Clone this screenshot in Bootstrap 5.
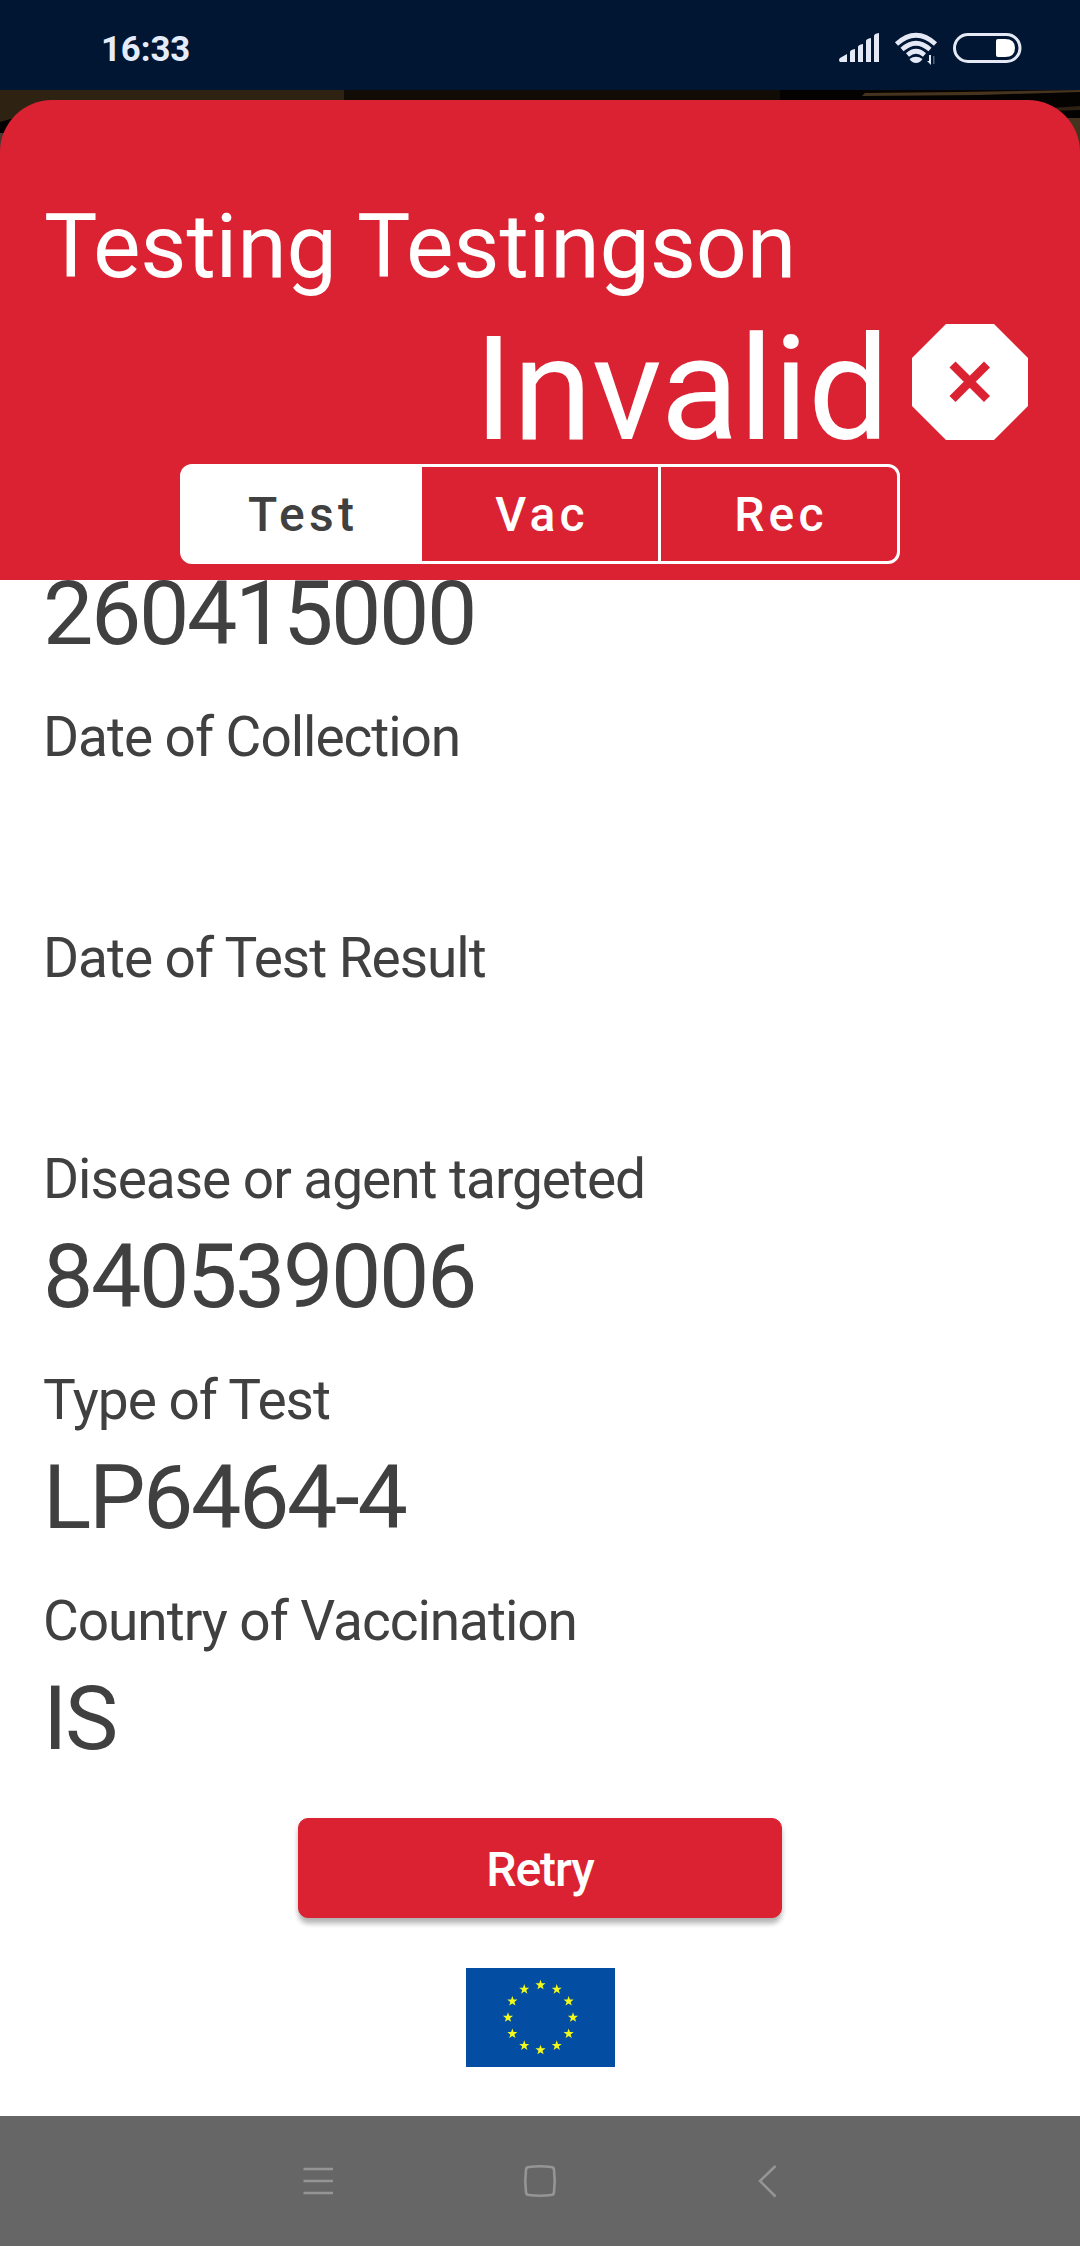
<!DOCTYPE html>
<html lang="en">
<head>
<meta charset="utf-8">
<meta name="viewport" content="width=device-width, initial-scale=1">
<title>Certificate check</title>
<link rel="stylesheet" href="https://cdn.jsdelivr.net/npm/bootstrap@5.3.0/dist/css/bootstrap.min.css">
<style>
:root { --brand-red: #da2232; --ink: #404040; }
body { font-family: Roboto, "Liberation Sans", sans-serif; color: var(--ink); background: #fff; }
.screen { width: 1080px; height: 2246px; }
.status-strip { height: 90px; background: #001633; padding: 1px 59px 0 101px; }
.status-time { font-size: 34.8px; line-height: 40px; font-weight: 700; color: #e4ecfa; letter-spacing: -.1px; padding-top: 10px; margin-bottom: 4px; }
.camera-view { position: relative; height: 490px; padding-top: 10px; background: #080502; }
.cam-art { position: absolute; left: 0; top: 0; }
.result-head { position: relative; height: 480px; background: var(--brand-red); border-radius: 52px 52px 0 0; color: #fff; padding-top: 94px; }
.holder-name { font-size: 89.7px; line-height: 106px; padding-left: 44px; letter-spacing: -.2px; }
.verdict-row { height: 160px; padding-right: 52px; }
.verdict-text { font-size: 144.3px; line-height: 160px; padding-top: 10px; margin-right: 23px; letter-spacing: -.4px; }
.verdict-icon { margin-top: 24px; }
.tab-switch { width: 720px; height: 100px; margin: 4px auto 0; }
.tab-switch .btn { --bs-btn-color: #fff; --bs-btn-border-color: #fff; --bs-btn-border-width: 3px; --bs-btn-border-radius: 12px;
  --bs-btn-active-bg: #fff; --bs-btn-active-color: var(--ink); --bs-btn-active-border-color: #fff;
  font-size: 48px; font-weight: 500; letter-spacing: 4.2px; line-height: 92px; padding: 2px 0 0 4px; flex: 0 0 242px; }
.tab-switch.btn-group > .btn:not(:first-child) { margin-left: -3px; }
.details { height: 1230px; padding-left: 43px; }
.detail-item { height: 221px; }
.detail-item.scrolled { height: 125px; }
.detail-label { font-size: 55px; line-height: 64px; font-weight: 400; letter-spacing: -1.04px; }
.detail-value { font-size: 89.7px; line-height: 106px; letter-spacing: -2.4px; margin: 13px 0 0; }
.scrolled .detail-value { margin-top: -19px; }
.retry-btn { --bs-btn-bg: var(--brand-red); --bs-btn-border-color: var(--brand-red); --bs-btn-color: #fff; --bs-btn-border-radius: 10px;
  width: 484px; height: 100px; margin-top: 8px; padding: 4px 0 0; font-size: 48px; font-weight: 500; letter-spacing: -1.1px;
  box-shadow: 0 7px 5px -1px rgba(0,0,0,.2), 0 3px 6px rgba(0,0,0,.16); }
.flag { margin-top: 50px; }
.system-nav { height: 130px; background: #666; }
</style>
<script src="https://cdn.jsdelivr.net/npm/bootstrap@5.3.0/dist/js/bootstrap.bundle.min.js"></script>
</head>
<body>
<div class="screen d-flex flex-column overflow-hidden">
  <div class="status-strip d-flex align-items-center justify-content-between flex-shrink-0">
    <span class="status-time">16:33</span>
    <svg width="183" height="34" viewBox="838 31 183 34" style="overflow:visible" aria-hidden="true">
      <g fill="#e4e9f5" transform="translate(0 2)">
        <path d="M840 58L847 54V62H840Q838 60 840 58Z"/>
        <path d="M850 52Q850 50 855 49V62H850ZM858 47Q858 45 863 44V62H858ZM866 41Q866 39 871 38V62H866ZM874 36Q874 33.500 879 33V62H874Z"/>
        <path d="M909.500 59Q916 54.500 922.500 59Q920 63 916 63Q912 63 909.500 59Z"/>
        <g fill="none" stroke="#e4e9f5" stroke-width="4.600">
          <path d="M896.500 44Q916 26.500 935.500 44M902 49.500Q916 37 930 49.500M907.500 55Q916 47.500 924.500 55"/>
          <rect x="954.500" y="34.500" width="65.500" height="27" rx="13.500" stroke-width="3"/>
        </g>
        <path d="M929 55H931V65L927 61H929Z"/>
        <path d="M933 56h1.500v8H933z" opacity=".35"/>
        <path fill="#fff" d="M998 39H1005Q1015 39 1015 48T1005 57H998Q996 57 996 55V41Q996 39 998 39Z"/>
      </g>
    </svg>
  </div>

  <main class="camera-view flex-shrink-0">
    <svg class="cam-art" width="1080" height="70" viewBox="0 0 1080 70" aria-hidden="true">
      <rect width="344" height="70" fill="#2e2212"/>
      <path fill="#000" d="M0 32L14 28V43L0 44Z"/>
      <rect y="43" width="8" height="27" fill="#443a30"/>
      <path fill="#120c06" d="M344 0H1080V70H344Z"/>
      <path fill="#050301" d="M780 0H1080V70H780Z"/>
      <path fill="#46341f" d="M865 3L960 2L1080 0V2L980 5L862 6Z"/>
      <path fill="#2d2114" d="M1050 18L1080 16V20L1050 21Z"/>
      <rect x="1066" y="28" width="14" height="42" fill="#44341f"/>
    </svg>
    <div class="result-head">
      <div class="holder-name">Testing Testingson</div>
      <div class="verdict-row d-flex justify-content-end">
        <span class="verdict-text">Invalid</span>
        <svg class="verdict-icon" width="116" height="116" viewBox="0 0 116 116" role="img" aria-label="Invalid">
          <path fill="#fff" d="M34 0H82L116 34V82L82 116H34L0 82V34Z"/>
          <path stroke="#da2232" stroke-width="8.500" d="M40.500 40.500L75 75M75 40.500L40.500 75"/>
        </svg>
      </div>
      <div class="tab-switch btn-group d-flex" role="group" aria-label="Certificate type">
        <button type="button" class="btn active">Test</button>
        <button type="button" class="btn">Vac</button>
        <button type="button" class="btn">Rec</button>
      </div>
    </div>
  </main>

  <section class="details overflow-hidden flex-shrink-0">
    <dl class="mb-0">
      <div class="detail-item scrolled d-flex"><dd class="detail-value">260415000</dd></div>
      <div class="detail-item"><dt class="detail-label">Date of Collection</dt></div>
      <div class="detail-item"><dt class="detail-label">Date of Test Result</dt></div>
      <div class="detail-item"><dt class="detail-label">Disease or agent targeted</dt><dd class="detail-value">840539006</dd></div>
      <div class="detail-item"><dt class="detail-label">Type of Test</dt><dd class="detail-value">LP6464-4</dd></div>
      <div class="detail-item"><dt class="detail-label">Country of Vaccination</dt><dd class="detail-value">IS</dd></div>
    </dl>
  </section>

  <div class="d-flex flex-column align-items-center flex-grow-1">
    <button type="button" class="btn retry-btn">Retry</button>
    <svg class="flag" width="150" height="99" viewBox="-1 0 150 99" role="img" aria-label="European Union">
      <defs><path id="star" fill="#f2f91b" transform="scale(1.16)" d="M0-4.600L1.080-1.420 4.370-1.420 1.750.57 2.700 3.720 0 1.840-2.700 3.720-1.750.57-4.370-1.420-1.080-1.420Z"/></defs>
      <rect width="149" height="99" fill="#034ea2"/>
      <use href="#star" x="74.500" y="17"/><use href="#star" x="90.750" y="21.350"/><use href="#star" x="102.650" y="33.250"/>
      <use href="#star" x="107" y="49.500"/><use href="#star" x="102.650" y="65.750"/><use href="#star" x="90.750" y="77.650"/>
      <use href="#star" x="74.500" y="82"/><use href="#star" x="58.250" y="77.650"/><use href="#star" x="46.350" y="65.750"/>
      <use href="#star" x="42" y="49.500"/><use href="#star" x="46.350" y="33.250"/><use href="#star" x="58.250" y="21.350"/>
    </svg>
  </div>

  <nav class="system-nav d-flex justify-content-center align-items-center flex-shrink-0">
    <svg width="474" height="34" viewBox="303 2164 474 34" fill="none" stroke="#959595" stroke-width="2.600" aria-hidden="true">
      <path d="M303.500 2169H333M303.500 2181H333M303.500 2193H333"/>
      <path d="M529 2167Q540 2165.500 551 2167Q554 2167 554 2170Q555.500 2181 554 2192Q554 2195 551 2195Q540 2196.500 529 2195Q526 2195 526 2192Q524.500 2181 526 2170Q526 2167 529 2167Z"/>
      <path d="M775.500 2166L760 2181L775.500 2196.500"/>
    </svg>
  </nav>
</div>
</body>
</html>
